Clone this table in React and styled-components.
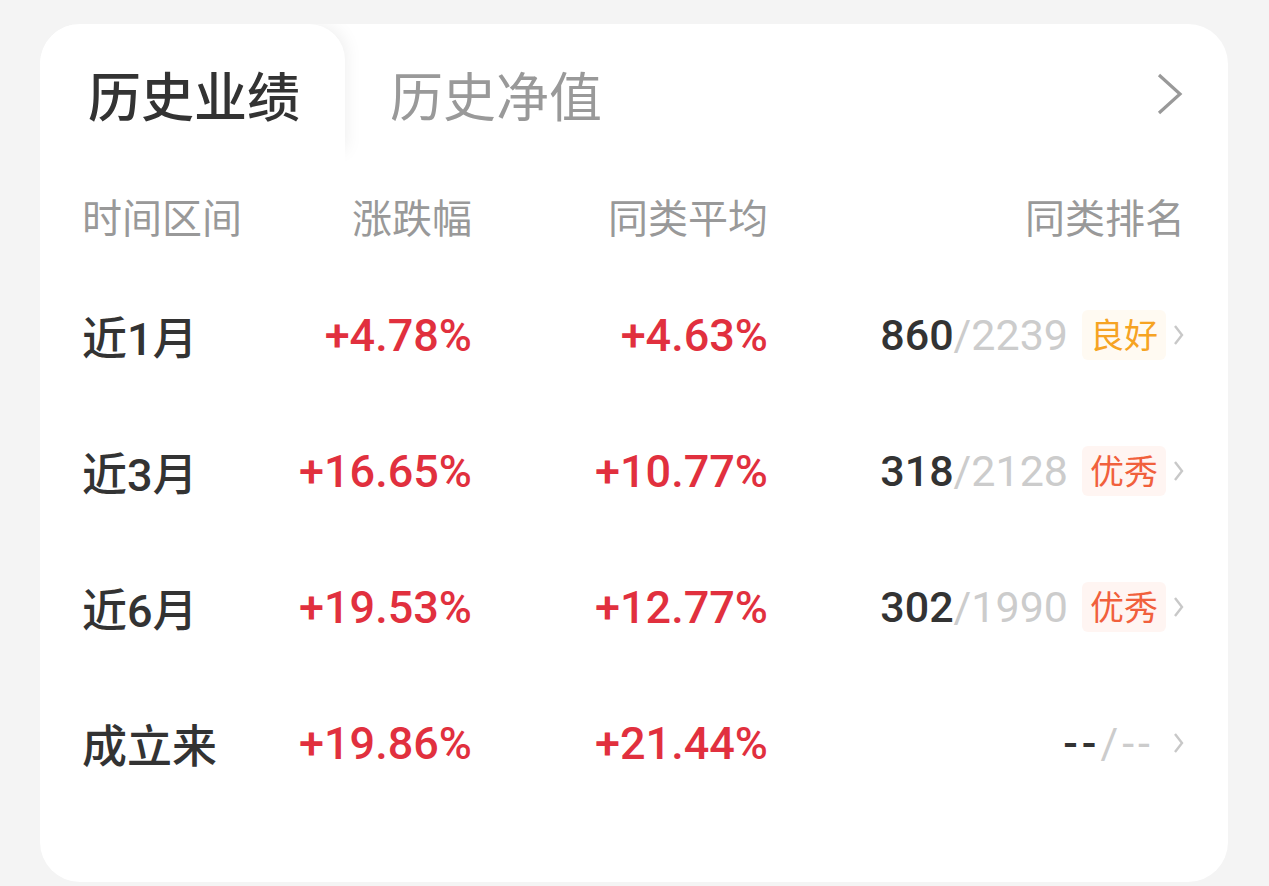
import React from "react";
import styled, { createGlobalStyle } from "styled-components";

const GlobalStyle = createGlobalStyle`
  html, body {
    margin: 0;
    padding: 0;
    background: #f4f4f4;
  }
  body {
    font-family: "Noto Sans CJK SC", "Noto Sans", sans-serif;
  }
`;

const Page = styled.div`
  padding: 24px 41px 4px 40px;
`;

const Card = styled.div`
  background: #fff;
  border-radius: 40px;
  overflow: hidden;
  padding-bottom: 71px;
`;

const TabBar = styled.div`
  display: flex;
  align-items: stretch;
  height: 140px;
  padding-right: 44px;
`;

const Tab = styled.div`
  position: relative;
  display: flex;
  align-items: center;
  padding: 0 45px 0 ${(p) => (p.$active ? "48px" : "45px")};
  font-size: 53px;
  font-weight: ${(p) => (p.$active ? 500 : 400)};
  color: ${(p) => (p.$active ? "#333" : "#999")};
  background: #fff;
  z-index: ${(p) => (p.$active ? 1 : 0)};
  border-top-right-radius: ${(p) => (p.$active ? "36px" : "0")};
  box-shadow: ${(p) =>
    p.$active ? "8px -6px 18px -8px rgba(0, 0, 0, 0.08)" : "none"};
`;

const Spacer = styled.div`
  flex: 1;
`;

const More = styled.div`
  display: flex;
  align-items: center;
`;

const Grid = styled.div`
  display: grid;
  grid-template-columns: 160px 230px 296px 1fr;
  padding: 0 43px 0 42px;
`;

const HeadCell = styled.div`
  height: 103px;
  display: flex;
  align-items: center;
  justify-content: ${(p) => (p.$right ? "flex-end" : "flex-start")};
  font-size: 40px;
  color: #999;
`;

const Cell = styled.div`
  height: 136px;
  display: flex;
  align-items: center;
  justify-content: ${(p) => (p.$right ? "flex-end" : "flex-start")};
`;

const Period = styled.span`
  font-size: 45px;
  font-weight: 500;
  color: #333;
  font-family: "Roboto", "Noto Sans CJK SC", sans-serif;
`;

const Value = styled.span`
  font-family: "Roboto", "Noto Sans", sans-serif;
  font-size: 45px;
  font-weight: 500;
  color: #e1303e;
`;

const Rank = styled.span`
  font-family: "Roboto", "Noto Sans", sans-serif;
  font-size: 43px;
  font-weight: 500;
  color: #333;
  letter-spacing: ${(p) => (p.$empty ? "4px" : "0")};
  margin-right: ${(p) => (p.$empty ? "12px" : "0")};
`;

const Total = styled.span`
  font-weight: 400;
  color: #ccc;
`;

const Tag = styled.span`
  margin-left: 14px;
  padding: 2px 8px 4px;
  border-radius: 6px;
  font-size: 34px;
  line-height: 44px;
  color: ${(p) => (p.$level === "good" ? "#f6a323" : "#f1603c")};
  background: ${(p) => (p.$level === "good" ? "#fffaf2" : "#fff5f2")};
`;

const SmallArrow = styled.svg`
  margin-left: 7px;
  flex-shrink: 0;
`;

const rows = [
  { period: "近1月", change: "+4.78%", avg: "+4.63%", rank: "860", total: "2239", tag: "良好", level: "good" },
  { period: "近3月", change: "+16.65%", avg: "+10.77%", rank: "318", total: "2128", tag: "优秀", level: "best" },
  { period: "近6月", change: "+19.53%", avg: "+12.77%", rank: "302", total: "1990", tag: "优秀", level: "best" },
  { period: "成立来", change: "+19.86%", avg: "+21.44%", rank: "--", total: "--", tag: null },
];

function Arrow() {
  return (
    <SmallArrow width="12" height="22" viewBox="0 0 12 22">
      <path d="M2 2 L9 11 L2 20" fill="none" stroke="#c8c8c8" strokeWidth="2.4" />
    </SmallArrow>
  );
}

export default function App() {
  return (
    <Page>
      <GlobalStyle />
      <Card>
        <TabBar>
          <Tab $active>历史业绩</Tab>
          <Tab>历史净值</Tab>
          <Spacer />
          <More>
            <svg width="28" height="42" viewBox="0 0 28 42">
              <path d="M3 2 L24 21 L3 40" fill="none" stroke="#999" strokeWidth="3.2" />
            </svg>
          </More>
        </TabBar>
        <Grid>
          <HeadCell>时间区间</HeadCell>
          <HeadCell $right>涨跌幅</HeadCell>
          <HeadCell $right>同类平均</HeadCell>
          <HeadCell $right>同类排名</HeadCell>
          {rows.map((r) => (
            <React.Fragment key={r.period}>
              <Cell>
                <Period>{r.period}</Period>
              </Cell>
              <Cell $right>
                <Value>{r.change}</Value>
              </Cell>
              <Cell $right>
                <Value>{r.avg}</Value>
              </Cell>
              <Cell $right>
                <Rank $empty={!r.tag}>
                  {r.rank}
                  <Total>/{r.total}</Total>
                </Rank>
                {r.tag && <Tag $level={r.level}>{r.tag}</Tag>}
                <Arrow />
              </Cell>
            </React.Fragment>
          ))}
        </Grid>
      </Card>
    </Page>
  );
}
